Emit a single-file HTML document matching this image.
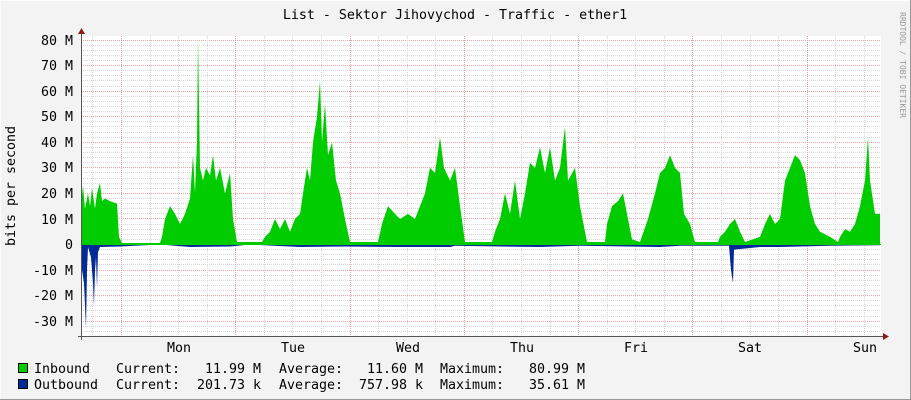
<!DOCTYPE html>
<html><head><style>
html,body{margin:0;padding:0;background:#f3f3f3;}
svg{display:block;}
text{font-family:"DejaVu Sans Mono","Liberation Mono",monospace;font-size:13.3px;fill:#000;}
</style></head><body>
<svg id="s" width="911" height="400" xmlns="http://www.w3.org/2000/svg">
<rect x="0" y="0" width="911" height="400" fill="#f3f3f3"/>
<rect x="0.5" y="0.5" width="910" height="399" fill="none" stroke="#fcfcfc"/>
<line x1="0" y1="399.5" x2="911" y2="399.5" stroke="#999"/>
<line x1="910.5" y1="0" x2="910.5" y2="400" stroke="#999"/>
<rect x="81" y="36" width="800" height="300" fill="#fff"/>
<g id="grid"></g>
<path id="inb" fill="#00cc00"/>
<path id="outb" fill="#002a97"/>
<line x1="81" y1="244.5" x2="881" y2="244.5" stroke="#00cc00" stroke-width="1"/>
<line x1="81.5" y1="33" x2="81.5" y2="340" stroke="#555"/>
<line x1="78" y1="336.5" x2="884" y2="336.5" stroke="#555"/>
<polygon points="78,34 85,34 81.5,28" fill="#8b1a1a"/>
<polygon points="883,333 883,340 889,336.5" fill="#8b1a1a"/>
<text x="455" y="19" text-anchor="middle">List - Sektor Jihovychod - Traffic - ether1</text>
<text transform="translate(15,186) rotate(-90)" text-anchor="middle">bits per second</text>
<text transform="translate(900,12) rotate(90)" style="font-size:8px;fill:#999">RRDTOOL / TOBI OETIKER</text>
<g text-anchor="end">
<text x="73" y="45">80 M</text>
<text x="73" y="70">70 M</text>
<text x="73" y="96">60 M</text>
<text x="73" y="121">50 M</text>
<text x="73" y="147">40 M</text>
<text x="73" y="172">30 M</text>
<text x="73" y="198">20 M</text>
<text x="73" y="224">10 M</text>
<text x="73" y="249">0</text>
<text x="73" y="275">-10 M</text>
<text x="73" y="300">-20 M</text>
<text x="73" y="326">-30 M</text>
</g>
<g text-anchor="middle">
<text x="179" y="352">Mon</text>
<text x="293" y="352">Tue</text>
<text x="408" y="352">Wed</text>
<text x="522" y="352">Thu</text>
<text x="636" y="352">Fri</text>
<text x="750" y="352">Sat</text>
<text x="865" y="352">Sun</text>
</g>
<rect x="18.5" y="363.5" width="9" height="9" fill="#00cc00" stroke="#000"/>
<rect x="18.5" y="379.5" width="9" height="9" fill="#002a97" stroke="#000"/>
<text x="34" y="373">Inbound</text>
<text x="116" y="373">Current:</text>
<text x="261" y="373" text-anchor="end">11.99 M</text>
<text x="279" y="373">Average:</text>
<text x="423" y="373" text-anchor="end">11.60 M</text>
<text x="440" y="373">Maximum:</text>
<text x="585" y="373" text-anchor="end">80.99 M</text>
<text x="34" y="389">Outbound</text>
<text x="116" y="389">Current:</text>
<text x="261" y="389" text-anchor="end">201.73 k</text>
<text x="279" y="389">Average:</text>
<text x="423" y="389" text-anchor="end">757.98 k</text>
<text x="440" y="389">Maximum:</text>
<text x="585" y="389" text-anchor="end">35.61 M</text>
</svg>
<script>
var g=document.getElementById('grid'),h='';
for(var k=-18;k<=41;k++){var y=Math.round(244-k*5.11)+0.5;if(y<36||y>336)continue;
 h+='<line x1="81" x2="881" y1="'+y+'" y2="'+y+'" stroke="'+(k%5==0?'#eaa0a0':'#d6d6d6')+'" stroke-dasharray="1,1"/>';}
for(var i=-1;i<29;i++){var x=Math.round(121+i*28.57)+0.5;if(x<82||x>881)continue;
 h+='<line y1="36" y2="336" x1="'+x+'" x2="'+x+'" stroke="'+(i%4==0?'#eaa0a0':'#d6d6d6')+'" stroke-dasharray="1,1"/>';}
g.innerHTML=h;
var D=[81,15,83,23,85,14,88,20,90,15,92,22,95,14,97,20,100,24,102,17,105,18,110,17,117,16,119,3,122,0.6,160,0.6,
162,3,165,10,170,15,175,12,180,8,185,12,190,18,193,35,195,20,197,40,198,81,200,30,203,25,206,30,210,27,213,35,216,25,220,30,225,20,230,28,233,10,237,1,
262,1,265,3,270,5,275,10,280,6,285,10,290,5,295,10,300,12,303,20,307,30,310,25,313,40,317,50,320,64,322,40,325,55,328,35,332,40,336,25,340,20,345,10,350,1,
378,1,382,8,388,15,395,12,400,10,408,12,415,10,420,15,425,20,430,30,435,28,440,42,444,30,450,25,455,30,460,15,465,1,
492,1,495,5,500,10,505,20,510,12,515,25,520,10,525,20,530,32,535,30,540,38,545,28,550,38,555,25,560,30,565,46,568,25,575,30,580,15,587,1,
605,1,607,8,612,15,618,17,623,20,628,10,632,2,640,1,648,10,655,20,660,28,665,30,670,35,675,30,680,28,684,12,690,8,695,1,
718,1,720,3,725,5,730,8,735,10,740,5,745,1,760,3,765,8,770,12,775,8,780,10,785,25,790,30,795,35,800,33,805,28,810,15,815,8,820,5,830,3,
838,1,840,3,845,6,850,5,855,8,860,15,865,25,868,42,870,25,875,12,880,12];
var p='M81,244.5';for(var j=0;j<D.length;j+=2)p+=' L'+D[j]+','+(244.5-D[j+1]*2.555);p+=' L880,244.5Z';
document.getElementById('inb').setAttribute('d',p);
var O=[81,0,82,10,84,15,86,33,87,10,88,1,91,5,93,15,94,24,95,10,96,5,97,17,98,3,100,1,120,0.8,160,0,190,1,230,0.8,250,0,300,1,345,0.8,400,1,450,1,455,0.5,540,1,580,0.5,660,1,680,0.5,729,0.5,731,10,733,15,734,2,760,1,780,1,830,0.5,880,0.3];
var q='M81,244.5';for(var j=0;j<O.length;j+=2)q+=' L'+O[j]+','+(244.5+O[j+1]*2.555);q+=' L880,244.5Z';
document.getElementById('outb').setAttribute('d',q);
</script>
</body></html>
